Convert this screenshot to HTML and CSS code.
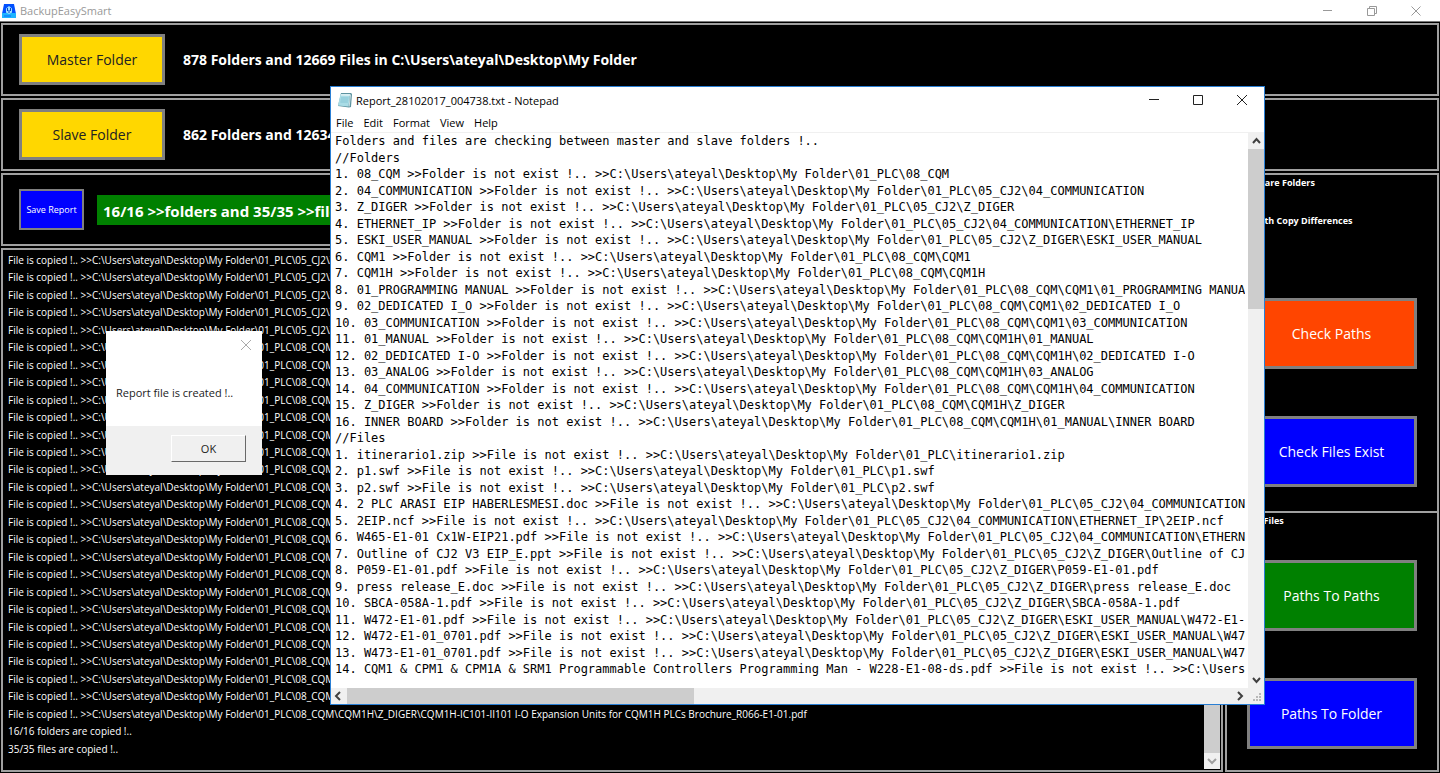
FILE: index.html
```html
<!DOCTYPE html>
<html lang="en">
<head>
    <meta charset="utf-8">
    <title>BackupEasySmart</title>
    <meta name="viewport" content="width=device-width, initial-scale=1.0">
    <link rel="stylesheet" href="styles.css">
</head>
<body>
    <header class="titlebar">
        <svg class="app-icon" viewBox="0 0 16 16" aria-hidden="true">
            <path d="M3 1h10l2 10H1z" fill="#0050ff"/>
            <path d="M1 10h14v5H1z" fill="#1eb4ff"/>
            <path d="M5 5.500L8 3l3 2.500v4L8 11 5 9.500z" fill="#9fe0ff"/>
            <path d="M6.500 5v3M9.500 5v3M8 7v3" stroke="#0646c8" fill="none"/>
            <path d="M3 13h7" stroke="#0a6cff"/>
        </svg>
        <h1 class="app-name">BackupEasySmart</h1>
        <div class="win-buttons">
            <button class="win-button" aria-label="Minimize"><svg viewBox="0 0 12 12"><path d="M1 5.500h9"/></svg></button>
            <button class="win-button" aria-label="Restore"><svg viewBox="0 0 12 12"><path d="M1.500 3.500h7v7h-7zM3.500 3.500v-2h7v7h-2"/></svg></button>
            <button class="win-button" aria-label="Close"><svg viewBox="0 0 12 12"><path d="M1.500 1.500l9 9M10.500 1.500l-9 9"/></svg></button>
        </div>
    </header>

    <main class="app">
        <section class="panel row">
            <button class="btn btn-folder">Master Folder</button>
            <p class="info">878 Folders and 12669 Files in C:\Users\ateyal\Desktop\My Folder</p>
        </section>
        <section class="panel row">
            <button class="btn btn-folder">Slave Folder</button>
            <p class="info">862 Folders and 12634 Files in C:\Users\ateyal\Desktop\My Folder</p>
        </section>

        <div class="columns">
            <div class="left">
                <section class="panel row">
                    <button class="btn btn-save">Save Report</button>
                    <p class="status">16/16 &gt;&gt;folders and 35/35 &gt;&gt;files are copied !..</p>
                </section>
                <section class="panel log">
                    <ul class="log-list">
                        <li>File is copied !.. &gt;&gt;C:\Users\ateyal\Desktop\My Folder\01_PLC\05_CJ2\Z_DIGER</li>
                        <li>File is copied !.. &gt;&gt;C:\Users\ateyal\Desktop\My Folder\01_PLC\05_CJ2\Z_DIGER</li>
                        <li>File is copied !.. &gt;&gt;C:\Users\ateyal\Desktop\My Folder\01_PLC\05_CJ2\Z_DIGER</li>
                        <li>File is copied !.. &gt;&gt;C:\Users\ateyal\Desktop\My Folder\01_PLC\05_CJ2\Z_DIGER</li>
                        <li>File is copied !.. &gt;&gt;C:\Users\ateyal\Desktop\My Folder\01_PLC\05_CJ2\Z_DIGER</li>
                        <li>File is copied !.. &gt;&gt;C:\Users\ateyal\Desktop\My Folder\01_PLC\08_CQM\CQM1</li>
                        <li>File is copied !.. &gt;&gt;C:\Users\ateyal\Desktop\My Folder\01_PLC\08_CQM\CQM1</li>
                        <li>File is copied !.. &gt;&gt;C:\Users\ateyal\Desktop\My Folder\01_PLC\08_CQM\CQM1</li>
                        <li>File is copied !.. &gt;&gt;C:\Users\ateyal\Desktop\My Folder\01_PLC\08_CQM\CQM1</li>
                        <li>File is copied !.. &gt;&gt;C:\Users\ateyal\Desktop\My Folder\01_PLC\08_CQM\CQM1</li>
                        <li>File is copied !.. &gt;&gt;C:\Users\ateyal\Desktop\My Folder\01_PLC\08_CQM\CQM1</li>
                        <li>File is copied !.. &gt;&gt;C:\Users\ateyal\Desktop\My Folder\01_PLC\08_CQM\CQM1</li>
                        <li>File is copied !.. &gt;&gt;C:\Users\ateyal\Desktop\My Folder\01_PLC\08_CQM\CQM1</li>
                        <li>File is copied !.. &gt;&gt;C:\Users\ateyal\Desktop\My Folder\01_PLC\08_CQM\CQM1</li>
                        <li>File is copied !.. &gt;&gt;C:\Users\ateyal\Desktop\My Folder\01_PLC\08_CQM\CQM1</li>
                        <li>File is copied !.. &gt;&gt;C:\Users\ateyal\Desktop\My Folder\01_PLC\08_CQM\CQM1</li>
                        <li>File is copied !.. &gt;&gt;C:\Users\ateyal\Desktop\My Folder\01_PLC\08_CQM\CQM1H</li>
                        <li>File is copied !.. &gt;&gt;C:\Users\ateyal\Desktop\My Folder\01_PLC\08_CQM\CQM1H</li>
                        <li>File is copied !.. &gt;&gt;C:\Users\ateyal\Desktop\My Folder\01_PLC\08_CQM\CQM1H</li>
                        <li>File is copied !.. &gt;&gt;C:\Users\ateyal\Desktop\My Folder\01_PLC\08_CQM\CQM1H</li>
                        <li>File is copied !.. &gt;&gt;C:\Users\ateyal\Desktop\My Folder\01_PLC\08_CQM\CQM1H</li>
                        <li>File is copied !.. &gt;&gt;C:\Users\ateyal\Desktop\My Folder\01_PLC\08_CQM\CQM1H</li>
                        <li>File is copied !.. &gt;&gt;C:\Users\ateyal\Desktop\My Folder\01_PLC\08_CQM\CQM1H</li>
                        <li>File is copied !.. &gt;&gt;C:\Users\ateyal\Desktop\My Folder\01_PLC\08_CQM\CQM1H</li>
                        <li>File is copied !.. &gt;&gt;C:\Users\ateyal\Desktop\My Folder\01_PLC\08_CQM\CQM1H</li>
                        <li>File is copied !.. &gt;&gt;C:\Users\ateyal\Desktop\My Folder\01_PLC\08_CQM\CQM1H</li>
                        <li>File is copied !.. &gt;&gt;C:\Users\ateyal\Desktop\My Folder\01_PLC\08_CQM\CQM1H\Z_DIGER\CQM1H-IC101-II101 I-O Expansion Units for CQM1H PLCs Brochure_R066-E1-01.pdf</li>
                        <li>16/16 folders are copied !..</li>
                        <li>35/35 files are copied !..</li>
                    </ul>
                    <div class="log-scroll">
                        <span class="log-thumb"></span>
                        <svg class="log-arrow" viewBox="0 0 16 16"><path d="M4 6l4 4 4-4"/></svg>
                    </div>
                </section>
            </div>

            <aside class="panel side">
                <section class="group group-compare">
                    <h2 class="group-title">Compare Folders</h2>
                    <label class="check"><input type="checkbox" checked>With Copy Differences</label>
                    <div class="group-buttons">
                        <button class="btn btn-big orange">Check Paths</button>
                        <button class="btn btn-big blue">Check Files Exist</button>
                    </div>
                </section>
                <section class="group">
                    <h2 class="group-title">Copy Files</h2>
                    <div class="group-buttons">
                        <button class="btn btn-big green">Paths To Paths</button>
                        <button class="btn btn-big blue">Paths To Folder</button>
                    </div>
                </section>
            </aside>
        </div>
    </main>

    <section class="dialog" role="dialog" aria-label="Report">
        <div class="dialog-body">
            <button class="dialog-close" aria-label="Close"><svg viewBox="0 0 12 12"><path d="M1 1l10 10M11 1L1 11"/></svg></button>
            <p class="dialog-text">Report file is created !..</p>
        </div>
        <div class="dialog-footer">
            <button class="dialog-ok">OK</button>
        </div>
    </section>

    <section class="notepad">
        <header class="notepad-title">
            <svg class="notepad-icon" viewBox="0 0 16 16" aria-hidden="true">
                <path d="M4 1h10l1 1-1 13-2 .5L1 14z" fill="#5d93a0"/>
                <path d="M3.500 2H13l-1.500 12.500L1 13.500z" fill="#a9dce6"/>
                <path d="M4 2h9l-.3 2-9-.3z" fill="#d9eef2"/>
                <path d="M4 6h7.500M3.700 8h7.500M3.400 10h7.500" stroke="#79bccb" stroke-width=".7"/>
                <path d="M13.500 2.500l-1.300 12" stroke="#e8f3f5" stroke-width=".8"/>
            </svg>
            <h2 class="notepad-name">Report_28102017_004738.txt - Notepad</h2>
            <div class="win-buttons dark">
                <button class="win-button" aria-label="Minimize"><svg viewBox="0 0 12 12"><path d="M1 5.500h10"/></svg></button>
                <button class="win-button" aria-label="Maximize"><svg viewBox="0 0 12 12"><path d="M1.500 1.500h9v9h-9z"/></svg></button>
                <button class="win-button" aria-label="Close"><svg viewBox="0 0 12 12"><path d="M1 1l10 10M11 1L1 11"/></svg></button>
            </div>
        </header>
        <nav class="menu">
            <button>File</button>
            <button>Edit</button>
            <button>Format</button>
            <button>View</button>
            <button>Help</button>
        </nav>
        <div class="editor">
            <textarea class="text" wrap="off" spellcheck="false" aria-label="Report text">
Folders and files are checking between master and slave folders !..
//Folders
1. 08_CQM &gt;&gt;Folder is not exist !.. &gt;&gt;C:\Users\ateyal\Desktop\My Folder\01_PLC\08_CQM
2. 04_COMMUNICATION &gt;&gt;Folder is not exist !.. &gt;&gt;C:\Users\ateyal\Desktop\My Folder\01_PLC\05_CJ2\04_COMMUNICATION
3. Z_DIGER &gt;&gt;Folder is not exist !.. &gt;&gt;C:\Users\ateyal\Desktop\My Folder\01_PLC\05_CJ2\Z_DIGER
4. ETHERNET_IP &gt;&gt;Folder is not exist !.. &gt;&gt;C:\Users\ateyal\Desktop\My Folder\01_PLC\05_CJ2\04_COMMUNICATION\ETHERNET_IP
5. ESKI_USER_MANUAL &gt;&gt;Folder is not exist !.. &gt;&gt;C:\Users\ateyal\Desktop\My Folder\01_PLC\05_CJ2\Z_DIGER\ESKI_USER_MANUAL
6. CQM1 &gt;&gt;Folder is not exist !.. &gt;&gt;C:\Users\ateyal\Desktop\My Folder\01_PLC\08_CQM\CQM1
7. CQM1H &gt;&gt;Folder is not exist !.. &gt;&gt;C:\Users\ateyal\Desktop\My Folder\01_PLC\08_CQM\CQM1H
8. 01_PROGRAMMING MANUAL &gt;&gt;Folder is not exist !.. &gt;&gt;C:\Users\ateyal\Desktop\My Folder\01_PLC\08_CQM\CQM1\01_PROGRAMMING MANUAL
9. 02_DEDICATED I_O &gt;&gt;Folder is not exist !.. &gt;&gt;C:\Users\ateyal\Desktop\My Folder\01_PLC\08_CQM\CQM1\02_DEDICATED I_O
10. 03_COMMUNICATION &gt;&gt;Folder is not exist !.. &gt;&gt;C:\Users\ateyal\Desktop\My Folder\01_PLC\08_CQM\CQM1\03_COMMUNICATION
11. 01_MANUAL &gt;&gt;Folder is not exist !.. &gt;&gt;C:\Users\ateyal\Desktop\My Folder\01_PLC\08_CQM\CQM1H\01_MANUAL
12. 02_DEDICATED I-O &gt;&gt;Folder is not exist !.. &gt;&gt;C:\Users\ateyal\Desktop\My Folder\01_PLC\08_CQM\CQM1H\02_DEDICATED I-O
13. 03_ANALOG &gt;&gt;Folder is not exist !.. &gt;&gt;C:\Users\ateyal\Desktop\My Folder\01_PLC\08_CQM\CQM1H\03_ANALOG
14. 04_COMMUNICATION &gt;&gt;Folder is not exist !.. &gt;&gt;C:\Users\ateyal\Desktop\My Folder\01_PLC\08_CQM\CQM1H\04_COMMUNICATION
15. Z_DIGER &gt;&gt;Folder is not exist !.. &gt;&gt;C:\Users\ateyal\Desktop\My Folder\01_PLC\08_CQM\CQM1H\Z_DIGER
16. INNER BOARD &gt;&gt;Folder is not exist !.. &gt;&gt;C:\Users\ateyal\Desktop\My Folder\01_PLC\08_CQM\CQM1H\01_MANUAL\INNER BOARD
//Files
1. itinerario1.zip &gt;&gt;File is not exist !.. &gt;&gt;C:\Users\ateyal\Desktop\My Folder\01_PLC\itinerario1.zip
2. p1.swf &gt;&gt;File is not exist !.. &gt;&gt;C:\Users\ateyal\Desktop\My Folder\01_PLC\p1.swf
3. p2.swf &gt;&gt;File is not exist !.. &gt;&gt;C:\Users\ateyal\Desktop\My Folder\01_PLC\p2.swf
4. 2 PLC ARASI EIP HABERLESMESI.doc &gt;&gt;File is not exist !.. &gt;&gt;C:\Users\ateyal\Desktop\My Folder\01_PLC\05_CJ2\04_COMMUNICATION\2 PLC ARASI
5. 2EIP.ncf &gt;&gt;File is not exist !.. &gt;&gt;C:\Users\ateyal\Desktop\My Folder\01_PLC\05_CJ2\04_COMMUNICATION\ETHERNET_IP\2EIP.ncf
6. W465-E1-01 Cx1W-EIP21.pdf &gt;&gt;File is not exist !.. &gt;&gt;C:\Users\ateyal\Desktop\My Folder\01_PLC\05_CJ2\04_COMMUNICATION\ETHERNET_IP\W465-E1-01
7. Outline of CJ2 V3 EIP_E.ppt &gt;&gt;File is not exist !.. &gt;&gt;C:\Users\ateyal\Desktop\My Folder\01_PLC\05_CJ2\Z_DIGER\Outline of CJ2 V3 EIP_E.ppt
8. P059-E1-01.pdf &gt;&gt;File is not exist !.. &gt;&gt;C:\Users\ateyal\Desktop\My Folder\01_PLC\05_CJ2\Z_DIGER\P059-E1-01.pdf
9. press release_E.doc &gt;&gt;File is not exist !.. &gt;&gt;C:\Users\ateyal\Desktop\My Folder\01_PLC\05_CJ2\Z_DIGER\press release_E.doc
10. SBCA-058A-1.pdf &gt;&gt;File is not exist !.. &gt;&gt;C:\Users\ateyal\Desktop\My Folder\01_PLC\05_CJ2\Z_DIGER\SBCA-058A-1.pdf
11. W472-E1-01.pdf &gt;&gt;File is not exist !.. &gt;&gt;C:\Users\ateyal\Desktop\My Folder\01_PLC\05_CJ2\Z_DIGER\ESKI_USER_MANUAL\W472-E1-01.pdf
12. W472-E1-01_0701.pdf &gt;&gt;File is not exist !.. &gt;&gt;C:\Users\ateyal\Desktop\My Folder\01_PLC\05_CJ2\Z_DIGER\ESKI_USER_MANUAL\W472-E1-01_0701.pdf
13. W473-E1-01_0701.pdf &gt;&gt;File is not exist !.. &gt;&gt;C:\Users\ateyal\Desktop\My Folder\01_PLC\05_CJ2\Z_DIGER\ESKI_USER_MANUAL\W473-E1-01_0701.pdf
14. CQM1 &amp; CPM1 &amp; CPM1A &amp; SRM1 Programmable Controllers Programming Man - W228-E1-08-ds.pdf &gt;&gt;File is not exist !.. &gt;&gt;C:\Users\ateyal\Desktop</textarea>
            <div class="scroll-v">
                <svg viewBox="0 0 16 16"><path d="M5 10l3.500-4L12 10"/></svg>
                <span class="thumb-v"></span>
                <svg viewBox="0 0 16 16"><path d="M5 6l3.500 4L12 6"/></svg>
            </div>
            <div class="scroll-h">
                <svg viewBox="0 0 16 16"><path d="M9 4L5 8l4 4"/></svg>
                <span class="thumb-h"></span>
                <svg viewBox="0 0 16 16"><path d="M6 4l4 4-4 4"/></svg>
            </div>
            <svg class="grip" viewBox="0 0 16 16"><path d="M11 5h2v2h-2zM8 8h2v2H8zM11 8h2v2h-2zM5 11h2v2H5zM8 11h2v2H8zM11 11h2v2h-2z"/></svg>
        </div>
    </section>
</body>
</html>
```

FILE: styles.css
```css
* {
    margin: 0;
    padding: 0;
    box-sizing: border-box;
}

body {
    display: flex;
    flex-direction: column;
    height: 100vh;
    position: relative;
    overflow: hidden;
    background-color: #000;
    color: #fff;
    font-family: "Open Sans", "Noto Sans", sans-serif;
    font-size: 11px;
}

button {
    font-family: inherit;
    border: none;
    background: none;
    color: inherit;
}

h1, h2 {
    font-weight: normal;
}

/* main window title bar */
.titlebar {
    display: flex;
    align-items: center;
    height: 22px;
    padding-left: 1px;
    padding-right: 2px;
    background-color: #fff;
    border-bottom: 1px solid #777;
    color: #999;
}

.app-icon {
    width: 16px;
    height: 16px;
    margin-right: 3px;
}

.app-name {
    font-size: 11px;
}

.win-buttons {
    display: flex;
    margin-left: auto;
}

.win-button {
    width: 44px;
    height: 20px;
    display: flex;
    align-items: center;
    justify-content: center;
}

.win-button svg {
    width: 12px;
    height: 12px;
    fill: none;
    stroke: #999;
}

.dark .win-button svg {
    stroke: #222;
}

/* panels */
.app {
    flex: 1;
    min-height: 0;
    display: flex;
    flex-direction: column;
    gap: 2px;
    padding: 1px;
}

.panel {
    border: 2px solid #a0a0a0;
}

.row {
    display: flex;
    align-items: center;
    height: 73px;
    padding-left: 16px;
    overflow: hidden;
    white-space: nowrap;
    flex-shrink: 0;
}

.columns {
    flex: 1;
    min-height: 0;
    display: flex;
    gap: 2px;
}

.left {
    flex: 1;
    min-width: 0;
    display: flex;
    flex-direction: column;
    gap: 2px;
}

.btn {
    border: 3px solid #808080;
    flex-shrink: 0;
}

.btn-folder {
    width: 146px;
    height: 51px;
    background-color: #ffd700;
    color: #222;
    font-size: 14px;
}

.info {
    margin-left: 18px;
    font-size: 14px;
    font-weight: bold;
}

.btn-save {
    width: 65px;
    height: 41px;
    border-width: 2px;
    background-color: #00f;
    font-size: 9px;
}

.status {
    flex: 1;
    height: 30px;
    line-height: 32px;
    margin-left: 13px;
    margin-right: 16px;
    padding-left: 6px;
    background-color: #008000;
    font-size: 15px;
    font-weight: bold;
}

/* log list */
.log {
    flex: 1;
    min-height: 0;
    display: flex;
}

.log-list {
    flex: 1;
    display: flex;
    flex-direction: column;
    justify-content: space-between;
    list-style: none;
    padding: 2px 0 13px 5px;
    line-height: 16px;
    font-size: 10px;
    white-space: nowrap;
    overflow: hidden;
}

.log-scroll {
    width: 16px;
    margin: 0 1px 1px 0;
    display: flex;
    flex-direction: column;
    background-color: #f0f0f0;
}

.log-thumb {
    flex: 1;
    background-color: #cdcdcd;
}

.log-arrow {
    height: 16px;
    fill: none;
    stroke: #a0a0a0;
    stroke-width: 2;
}

/* right side */
.side {
    width: 214px;
    display: flex;
    flex-direction: column;
}

.group {
    flex: 1;
    display: flex;
    flex-direction: column;
    padding: 0 5px 21px 4px;
}

.group-compare {
    flex: none;
    height: 338px;
    padding-bottom: 24px;
    border-bottom: 2px solid #a0a0a0;
}

.group-title {
    padding-left: 8px;
    font-size: 9px;
    font-weight: bold;
    line-height: 16px;
}

.check {
    display: flex;
    align-items: center;
    gap: 10px;
    margin-top: 22px;
    font-size: 9px;
    font-weight: bold;
    line-height: 16px;
}

.check input {
    width: 12px;
    height: 12px;
}

.group-buttons {
    margin-top: auto;
    display: flex;
    flex-direction: column;
    align-items: center;
    gap: 47px;
}

.btn-big {
    width: 170px;
    height: 71px;
    font-size: 14px;
}

.orange {
    background-color: #ff4500;
}

.blue {
    background-color: #00f;
}

.green {
    background-color: #008000;
}

/* message box */
.dialog {
    position: absolute;
    left: 106px;
    top: 331px;
    width: 156px;
    background-color: #fff;
    color: #222;
}

.dialog-body {
    display: flex;
    flex-direction: column;
    height: 95px;
    padding: 8px 10px;
}

.dialog-close {
    align-self: flex-end;
    width: 12px;
    height: 12px;
}

.dialog-close svg {
    display: block;
    fill: none;
    stroke: #aaa;
}

.dialog-text {
    margin-top: 34px;
    font-size: 11px;
    line-height: 16px;
    white-space: nowrap;
}

.dialog-footer {
    display: flex;
    justify-content: flex-end;
    height: 49px;
    padding: 9px 16px 13px;
    background-color: #f0f0f0;
}

.dialog-ok {
    width: 75px;
    border-right: 1px solid #696969;
    border-bottom: 1px solid #696969;
    border-top: 1px solid #fff;
    border-left: 1px solid #fff;
    font-size: 11px;
}

/* notepad window */
.notepad {
    position: absolute;
    left: 330px;
    top: 86px;
    width: 935px;
    height: 619px;
    display: flex;
    flex-direction: column;
    background-color: #fff;
    color: #000;
    border: 1px solid #2a7fd4;
}

.notepad-title {
    display: flex;
    align-items: center;
    height: 26px;
    padding-left: 6px;
}

.notepad-icon {
    width: 16px;
    height: 16px;
    margin-right: 3px;
}

.notepad-name {
    font-size: 11px;
}

.menu {
    display: flex;
    gap: 10px;
    height: 19px;
    padding-left: 5px;
}

.menu button {
    font-size: 11px;
}

.editor {
    flex: 1;
    min-height: 0;
    display: grid;
    grid-template-columns: 1fr 16px;
    grid-template-rows: 1fr 16px;
    border-top: 1px solid #f0f0f0;
}

.text {
    display: block;
    width: 100%;
    height: 100%;
    border: none;
    border-right: 3px solid #fff;
    outline: none;
    resize: none;
    overflow: hidden;
    padding-left: 4px;
    font-family: "DejaVu Sans Mono", monospace;
    font-size: 12px;
    line-height: 1.375;
    color: #000;
}

.scroll-v, .scroll-h {
    display: flex;
    background-color: #f0f0f0;
}

.scroll-v {
    flex-direction: column;
    justify-content: space-between;
}

.scroll-v svg, .scroll-h svg {
    width: 16px;
    height: 16px;
    fill: none;
    stroke: #404040;
    stroke-width: 2;
}

.thumb-v {
    height: 160px;
    margin-bottom: auto;
    background-color: #cdcdcd;
}

.thumb-h {
    width: 347px;
    margin-right: auto;
    background-color: #cdcdcd;
}

.grip {
    background-color: #f0f0f0;
    fill: #b8b8b8;
}
```
